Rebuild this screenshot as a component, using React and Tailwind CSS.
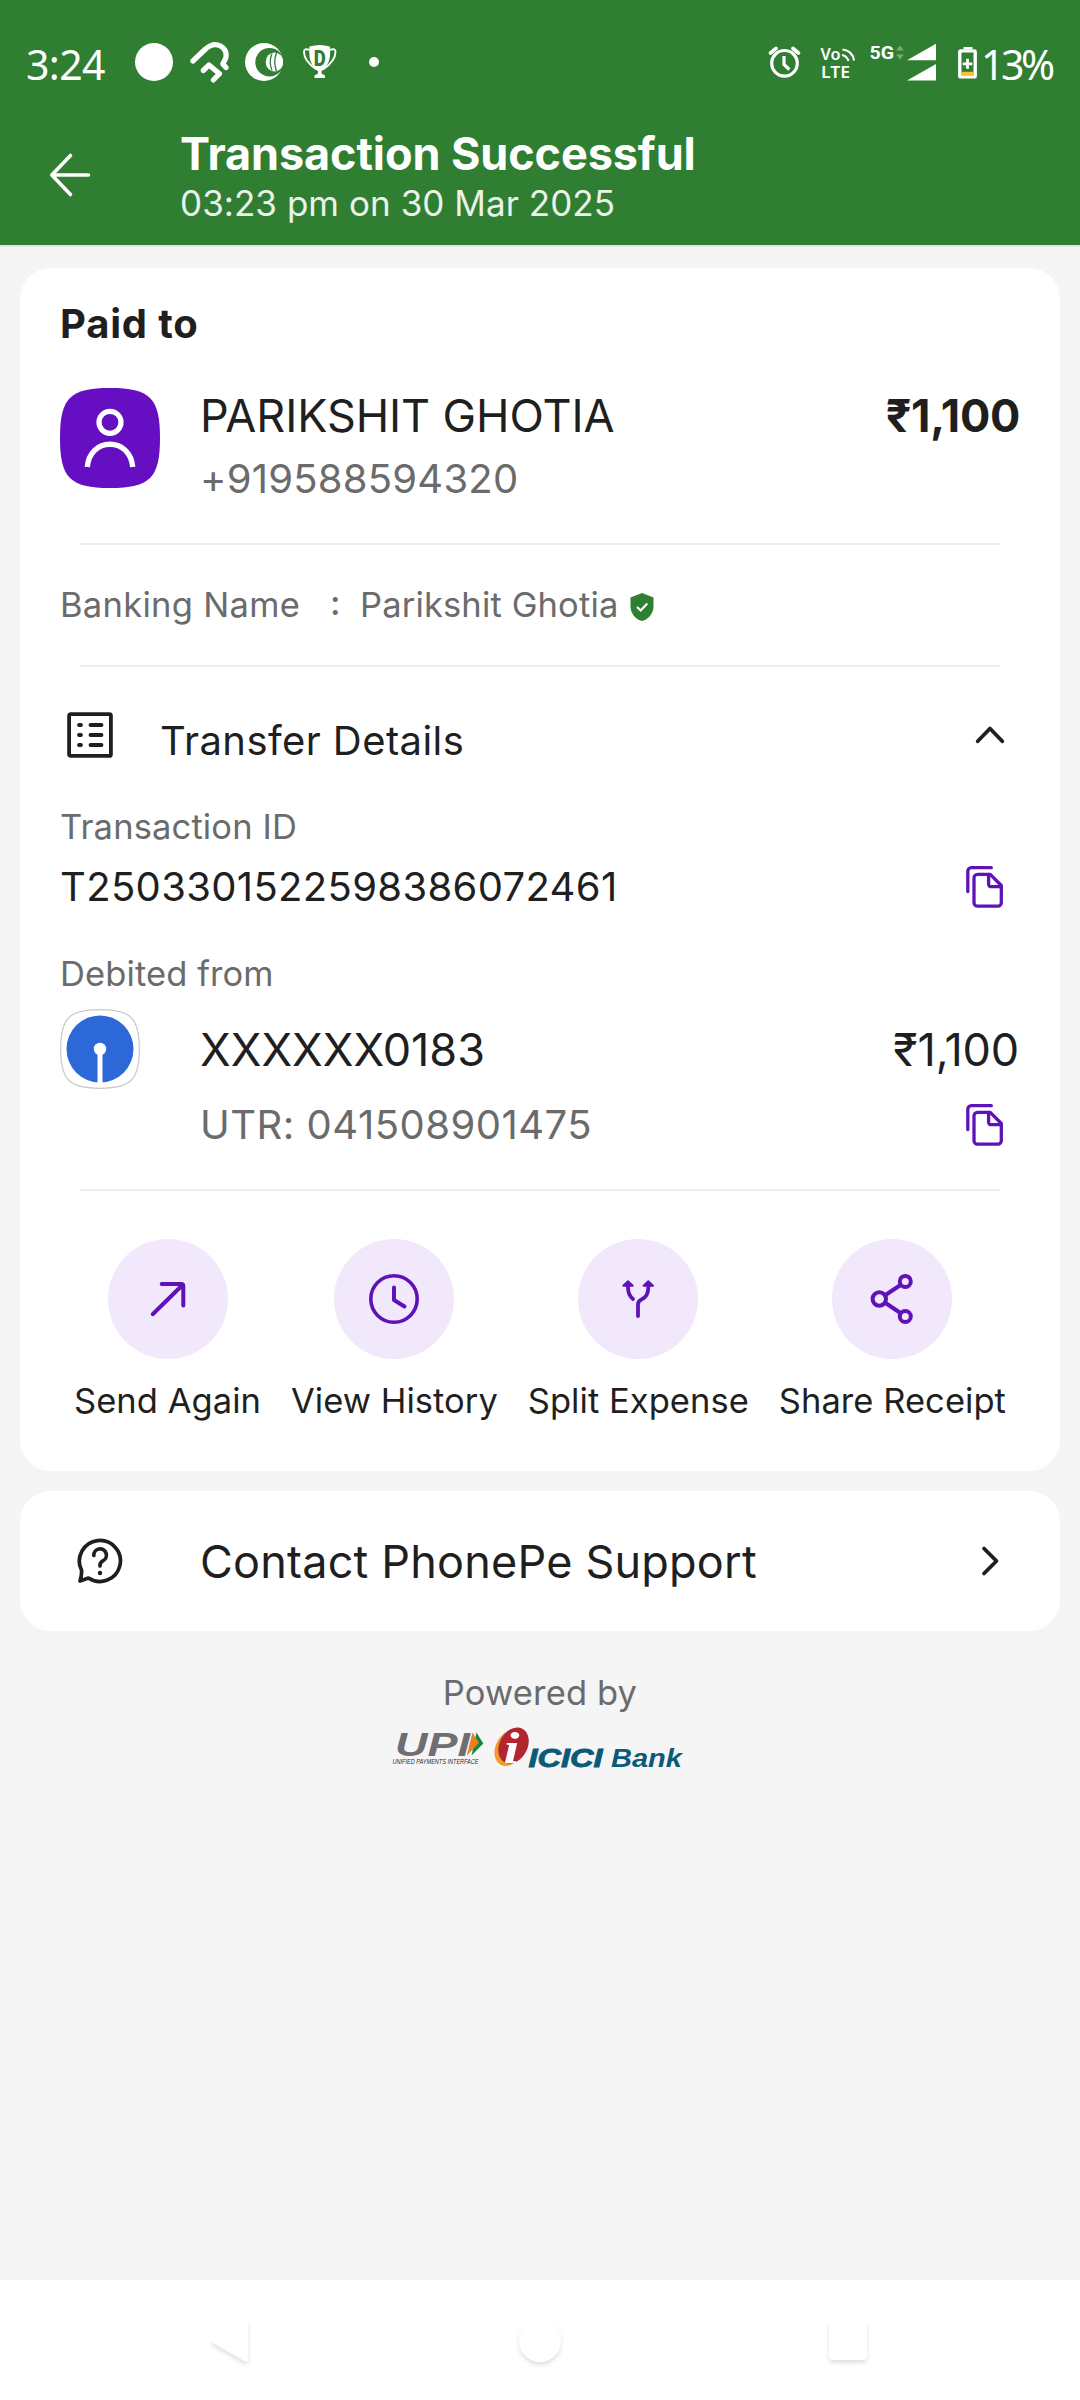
import React from "react";

const BackArrow = () => (
  <svg className="w-[48px] h-[48px]" viewBox="0 0 48 48" fill="none" stroke="white" strokeWidth="3.6" strokeLinecap="round" strokeLinejoin="round">
    <path d="M42.500 24H6M24.500 4.500L5.800 24l18.700 19.500" />
  </svg>
);

const CopyIcon = () => (
  <svg className="w-[60px] h-[48px]" viewBox="0 0 60 48" fill="none" stroke="#5f12b8" strokeWidth="3.300" strokeLinecap="round" strokeLinejoin="round">
    <path d="M7.800 28.500V8.200a3.500 3.500 0 0 1 3.500-3.500h20" />
    <path d="M17.500 11.300h12.700l11.100 11.200v17.200a3.500 3.500 0 0 1-3.500 3.500H17.500a3.500 3.500 0 0 1-3.500-3.500V14.800a3.500 3.500 0 0 1 3.500-3.500z" />
    <path d="M28.600 11.500v9.700a2.500 2.500 0 0 0 2.500 2.500h10" />
  </svg>
);

const StatusBar = () => (
  <div className="h-[124px] flex items-center pl-[26px] text-white font-['Noto_Sans',sans-serif]">
    <span className="w-[109px] text-[41px] leading-[48px] tracking-[-0.6px] pt-[4px]">3:24</span>
    <span className="w-[38px] h-[38px] rounded-full bg-white" />
    <svg className="ml-[17px] w-[40px] h-[44px]" viewBox="190 40 40 44" fill="none" stroke="white" strokeWidth="5.200" strokeLinecap="round" strokeLinejoin="round">
      <path d="M192.900 61L205 49.500Q213 42 220.500 46Q227.500 50 225.800 58L222.800 64L226 67.500" />
      <path d="M203.200 70.500L209 65L219.500 73.700L213.300 80" />
    </svg>
    <svg className="ml-[15px] w-[38px] h-[38px]" viewBox="0 0 38 38">
      <circle cx="19" cy="19" r="19" fill="white" />
      <circle cx="24.500" cy="19.300" r="14.200" fill="#2f7e32" />
      <ellipse cx="29.500" cy="19" rx="8.800" ry="9.500" fill="white" />
      <path d="M27 10.500Q23.500 19 27 27.500M31.500 9.800Q28 19 31.500 28.200" stroke="#2f7e32" strokeWidth="1.300" fill="none" />
    </svg>
    <svg className="ml-[20px] w-[34px] h-[34px]" viewBox="0 0 34 34">
      <path d="M6.500 1.500Q16.500-1.500 26.800 1.500Q28.500 16 22 22.500L18.500 26.500V28.500L22 30.500V33H11.500V30.500L15 28.500V26.500L11.500 22.500Q5 16 6.500 1.500z" fill="white" />
      <path d="M6.500 4.800Q1 3 1 7Q1 16 13.500 24.500M27 4.800Q32.500 3 32.500 7Q32.500 16 20 24.500" stroke="white" strokeWidth="1.900" fill="none" />
      <text x="16.700" y="20.500" textAnchor="middle" fontFamily="Roboto" fontWeight="900" fontSize="22" textLength="12" lengthAdjust="spacingAndGlyphs" fill="#2f7e32">D</text>
    </svg>
    <span className="ml-[32px] w-[10px] h-[10px] rounded-full bg-white" />

    {/* Right side: alarm, network, battery */}
    <div className="ml-auto w-[312px] flex items-center">
      <svg className="w-[33px] h-[40px]" viewBox="768 42 33 40" fill="none" stroke="white" strokeWidth="3.200" strokeLinecap="round">
        <circle cx="784.500" cy="63.300" r="12.800" />
        <path d="M784 56V64.500L789.300 69.500" strokeLinecap="butt" />
        <path d="M770.500 53L776 48.500M798.500 53L793 48.500" strokeWidth="3.600" />
      </svg>
      <svg className="ml-[19px] w-[36px] h-[40px] overflow-visible" viewBox="820 42 36 40">
        <text x="820.500" y="60" fontFamily="Noto Sans" fontWeight="600" fontSize="16.500" textLength="20" lengthAdjust="spacingAndGlyphs" fill="white">Vo</text>
        <text x="821" y="77.800" fontFamily="Noto Sans" fontWeight="600" fontSize="16.500" textLength="29" lengthAdjust="spacingAndGlyphs" fill="white">LTE</text>
        <path d="M842.500 49.500Q852.500 50.500 854 60.500M842 55Q847 56 848.500 61" stroke="white" strokeWidth="2.200" fill="none" />
      </svg>
      <svg className="ml-[12px] w-[69px] h-[40px] overflow-visible" viewBox="868 42 69 40">
        <text x="869.500" y="59" fontFamily="Roboto" fontWeight="700" fontSize="19" textLength="24.500" lengthAdjust="spacingAndGlyphs" fill="white">5G</text>
        <path d="M900 45.500l3.800 5h-7.600zM900 59.500l3.800-5h-7.600z" fill="white" opacity="0.35" />
        <path d="M907 60.300L936 43.700V60.300zM907 80.600L936 64V80.600z" fill="white" />
      </svg>
      <svg className="ml-[20px] w-[21px] h-[40px]" viewBox="957 42 21 40">
        <path d="M963.500 49.300V47h9V49.300z" fill="white" />
        <rect x="959.800" y="50.900" width="15.400" height="26" rx="1" fill="none" stroke="white" strokeWidth="3.400" />
        <rect x="961.500" y="71.800" width="12" height="3.600" fill="#fbc02d" />
        <path d="M967.500 58.800V68.800M962.700 63.800H972.300" stroke="white" strokeWidth="2.800" />
      </svg>
      <span className="ml-[3px] text-[41px] leading-[48px] tracking-[-3.4px] pt-[4px]">13%</span>
    </div>
  </div>
);

const Divider = () => <div className="h-[2px] mx-[20px] bg-[#ededed]" />;

const ACTIONS = [
  {
    label: "Send Again",
    icon: <path d="M14.700 45.200L45 15.500M23.700 15H43.300a2 2 0 0 1 2 2V36.500" strokeWidth="4" />,
  },
  {
    label: "View History",
    icon: (
      <>
        <circle cx="30" cy="30" r="23.200" strokeWidth="3.600" />
        <path d="M30 18.500V31L40.500 37.500" strokeWidth="4" />
      </>
    ),
  },
  {
    label: "Split Expense",
    icon: (
      <>
        <path d="M30 47V35.500Q30 32 33.500 30.500Q40.300 27.500 40.300 18.500V16M20 16V18.500Q20 26 25 30" strokeWidth="3.800" />
        <path d="M20 12.300l4.700 4.400h-9.400zM40.300 12.300l4.700 4.400h-9.400z" fill="#5f12b8" strokeWidth="2" />
      </>
    ),
  },
  {
    label: "Share Receipt",
    icon: (
      <g strokeWidth="4">
        <circle cx="17.300" cy="30" r="6.700" />
        <circle cx="43.300" cy="12.400" r="5.500" />
        <circle cx="43.300" cy="47.500" r="5.500" />
        <path d="M23.500 26L38.500 16M23.500 34L38.500 44" />
      </g>
    ),
  },
];

const ActionRow = () => (
  <div className="flex justify-between mt-[48px] pl-[14px] pr-[14px]">
    {ACTIONS.map((a) => (
      <button key={a.label} className="flex flex-col items-center">
        <span className="w-[120px] h-[120px] rounded-full bg-[#f1e8fb] flex items-center justify-center">
          <svg className="w-[60px] h-[60px]" viewBox="0 0 60 60" fill="none" stroke="#5f12b8" strokeLinecap="round" strokeLinejoin="round">
            {a.icon}
          </svg>
        </span>
        <span className="mt-[20px] text-[34.5px] leading-[44px] tracking-[0.05px] whitespace-nowrap">{a.label}</span>
      </button>
    ))}
  </div>
);

const TransactionCard = () => (
  <section className="mx-[20px] mt-[21px] bg-white rounded-[31px] pt-[32px] pb-[48px] px-[40px]">
    <h2 className="text-[40px] leading-[48px] font-bold tracking-[0.8px]">Paid to</h2>

    <div className="flex mt-[40px]">
      <svg className="w-[100px] h-[100px]" viewBox="0 0 100 100">
        <path d="M0 50C0 10 10 0 50 0S100 10 100 50 90 100 50 100 0 90 0 50" fill="#650ec2" />
        <circle cx="50" cy="34.300" r="11" fill="none" stroke="white" strokeWidth="5.200" />
        <path d="M27.300 79C28.500 65 38 56.300 50 56.300S71.500 65 72.700 79" fill="none" stroke="white" strokeWidth="5.400" />
      </svg>
      <div className="ml-[40px] flex-1">
        <div className="flex justify-between text-[45px] leading-[56px]">
          <span className="tracking-[-0.08px]">PARIKSHIT GHOTIA</span>
          <span className="font-bold tracking-[-0.3px]">₹1,100</span>
        </div>
        <p className="mt-[11px] text-[40px] leading-[48px] tracking-[0.23px] text-[#6b6b6b]">+919588594320</p>
      </div>
    </div>

    <div className="mt-[40px]">
      <Divider />
    </div>

    {/* Banking name */}
    <div className="flex items-center mt-[36px] mb-[36px] h-[48px] text-[34.5px] leading-[48px] text-[#6b6b6b]">
      <span className="w-[270px] tracking-[0.3px]">Banking Name</span>
      <span className="w-[30px] pb-[4px] font-medium">:</span>
      <span className="tracking-[0.15px]">Parikshit Ghotia</span>
      <svg className="ml-[12px] mt-[3px] w-[24px] h-[28px]" viewBox="0 0 24 28">
        <path d="M12 0L23.500 4.500V13C23.500 21 18 26.500 12 28C6 26.500 .5 21 .5 13V4.500z" fill="#2f7e32" />
        <path d="M7 14L10.700 17.500L17.300 10.500" fill="none" stroke="white" strokeWidth="2.200" />
      </svg>
    </div>

    <Divider />

    {/* Transfer details */}
    <div className="flex mt-[44px] h-[58px]">
      <svg className="ml-[6px] w-[48px] h-[48px]" viewBox="0 0 48 48" fill="none" stroke="#1f1f1f" strokeWidth="3.800" strokeLinecap="round">
        <rect x="3.100" y="3.100" width="41.800" height="41.800" rx="1.500" />
        <path d="M13 14h2M13 24h2M13 34h2M24.500 14h11M24.500 24h11M24.500 34h11" />
      </svg>
      <span className="ml-[46px] pt-[6px] text-[40px] leading-[48px] tracking-[0.42px]">Transfer Details</span>
      <svg className="ml-auto w-[60px] h-[48px]" viewBox="0 0 60 48" fill="none" stroke="#1f1f1f" strokeWidth="3.800" strokeLinecap="round" strokeLinejoin="round">
        <path d="M17.700 30.300L30 17.500L42.300 30.300" />
      </svg>
    </div>

    <p className="mt-[36px] text-[34.5px] leading-[44px] tracking-[0.15px] text-[#6b6b6b]">Transaction ID</p>
    <div className="flex justify-between mt-[14px]">
      <span className="text-[40px] leading-[48px] tracking-[0.34px]">T2503301522598386072461</span>
      <CopyIcon />
    </div>

    <p className="mt-[41px] text-[34.5px] leading-[44px] tracking-[0.1px] text-[#6b6b6b]">Debited from</p>
    <div className="flex items-center mt-[13px] h-[80px] text-[45px] leading-[56px]">
      <svg className="w-[80px] h-[80px]" viewBox="0 0 80 80">
        <path d="M.7 40C.7 9 9 .7 40 .7S79.300 9 79.300 40 71 79.300 40 79.300 .7 71 .7 40" fill="white" stroke="#c9c9c9" strokeWidth="1.200" />
        <circle cx="40" cy="40" r="33.500" fill="#2d68d8" />
        <circle cx="40" cy="40" r="6.200" fill="white" />
        <path d="M40 40V75" stroke="white" strokeWidth="5" />
      </svg>
      <span className="ml-[60px] pt-[2px]">XXXXXX0183</span>
      <span className="ml-auto mr-[1px] pt-[2px] tracking-[-0.2px]">₹1,100</span>
    </div>
    <div className="flex justify-between mt-[12px] pl-[140px] mb-[40px]">
      <span className="text-[40px] leading-[48px] tracking-[0.5px] text-[#6b6b6b]">UTR: 041508901475</span>
      <CopyIcon />
    </div>

    <Divider />
    <ActionRow />
  </section>
);

const SupportCard = () => (
  <section className="mx-[20px] mt-[20px] h-[140px] px-[40px] bg-white rounded-[31px] flex items-center">
    <svg className="ml-[16px] w-[48px] h-[48px]" viewBox="0 0 48 48" fill="none" stroke="#1f1f1f" strokeWidth="3.700" strokeLinecap="round" strokeLinejoin="round">
      <path d="M5.500 33A20.500 20.500 0 1 1 12.500 41L4 44Q6 38 5.500 33" />
      <path d="M17.800 18.500a6.300 6.300 0 1 1 9.400 5.200c-2.200 1.300-3.200 2.400-3.200 4.300v1" />
      <circle cx="24" cy="36" r="1.200" fill="#1f1f1f" strokeWidth="2" />
    </svg>
    <span className="ml-[76px] pt-[2px] text-[45px] leading-[56px] tracking-[0.2px]">Contact PhonePe Support</span>
    <svg className="ml-auto w-[60px] h-[48px]" viewBox="0 0 60 48" fill="none" stroke="#1f1f1f" strokeWidth="3.800" strokeLinecap="round" strokeLinejoin="round">
      <path d="M24 11.500L36.500 24L24 36.500" />
    </svg>
  </section>
);

const PoweredBy = () => (
  <footer className="mt-[40px] flex flex-col items-center text-[#6b6b6b]">
    <span className="text-[34.5px] leading-[44px] tracking-[0.15px]">Powered by</span>
    <svg className="mt-[9px] w-[300px] h-[48px] overflow-visible" viewBox="390 1724 300 48">
      <text x="395" y="1756" fontFamily="Liberation Sans" fontWeight="700" fontStyle="italic" fontSize="33" textLength="75" lengthAdjust="spacingAndGlyphs" fill="#6f6f71">UPI</text>
      <path d="M476.500 1732.500L483.300 1743.500L471.500 1755.500z" fill="#118a3e" />
      <path d="M472.500 1732.500L479 1743L466.800 1755.500z" fill="#ef7d21" />
      <text x="392.500" y="1764.300" fontFamily="Liberation Sans" fontStyle="italic" fontSize="7" textLength="86" lengthAdjust="spacingAndGlyphs" fill="#2c2c2c">UNIFIED PAYMENTS INTERFACE</text>
      <ellipse cx="509.500" cy="1748" rx="13.800" ry="19" transform="rotate(28 509.500 1748)" fill="#f39a2b" />
      <ellipse cx="513.500" cy="1745.500" rx="14" ry="19" transform="rotate(28 513.500 1745.500)" fill="#b32530" />
      <text x="503.500" y="1762.500" fontFamily="Liberation Serif" fontWeight="700" fontStyle="italic" fontSize="45" textLength="16" lengthAdjust="spacingAndGlyphs" fill="white">i</text>
      <text x="528.500" y="1767" fontFamily="Liberation Sans" fontWeight="700" fontStyle="italic" fontSize="26.500" textLength="74" lengthAdjust="spacingAndGlyphs" fill="#0b5a78" stroke="#0b5a78" strokeWidth="0.900">ICICI</text>
      <text x="611" y="1767" fontFamily="Liberation Sans" fontWeight="700" fontStyle="italic" fontSize="26.500" textLength="71" lengthAdjust="spacingAndGlyphs" fill="#0b5a78">Bank</text>
    </svg>
  </footer>
);

const NavBar = () => (
  <nav className="mt-auto h-[120px] pt-[2px] bg-white flex items-center justify-between pl-[207px] pr-[213px]">
    <svg className="w-[44px] h-[56px] drop-shadow-[0_3px_2px_rgba(0,0,0,0.12)]" viewBox="0 0 44 56">
      <path d="M5.500 29.500Q3.500 28 5.500 26.500L37 8Q41 6 41 10V46Q41 50 37 48z" fill="white" />
    </svg>
    <span className="w-[42px] h-[42px] rounded-full bg-white drop-shadow-[0_3px_2px_rgba(0,0,0,0.12)]" />
    <span className="w-[38px] h-[38px] rounded-[4px] bg-white drop-shadow-[0_3px_2px_rgba(0,0,0,0.12)]" />
  </nav>
);

const App = () => {
  return (
    <div className="w-[1080px] h-[2400px] flex flex-col bg-[#f5f5f5] text-[#1f1f1f] font-['Inter',sans-serif]">
      <header className="h-[247px] bg-[#2f7e32] border-b-2 border-[#e3e2e8] text-white">
        <StatusBar />
        <div className="flex pl-[46px] pt-[6px]">
          <div className="pt-[21px]">
            <BackArrow />
          </div>
          <div className="ml-[86px]">
            <h1 className="text-[45px] leading-[48px] font-bold tracking-[-0.1px]">Transaction Successful</h1>
            <p className="mt-[1px] text-[35px] leading-[48px] tracking-[0.05px] text-white/90">03:23 pm on 30 Mar 2025</p>
          </div>
        </div>
      </header>

      <TransactionCard />
      <SupportCard />
      <PoweredBy />
      <NavBar />
    </div>
  );
};

export default App;
